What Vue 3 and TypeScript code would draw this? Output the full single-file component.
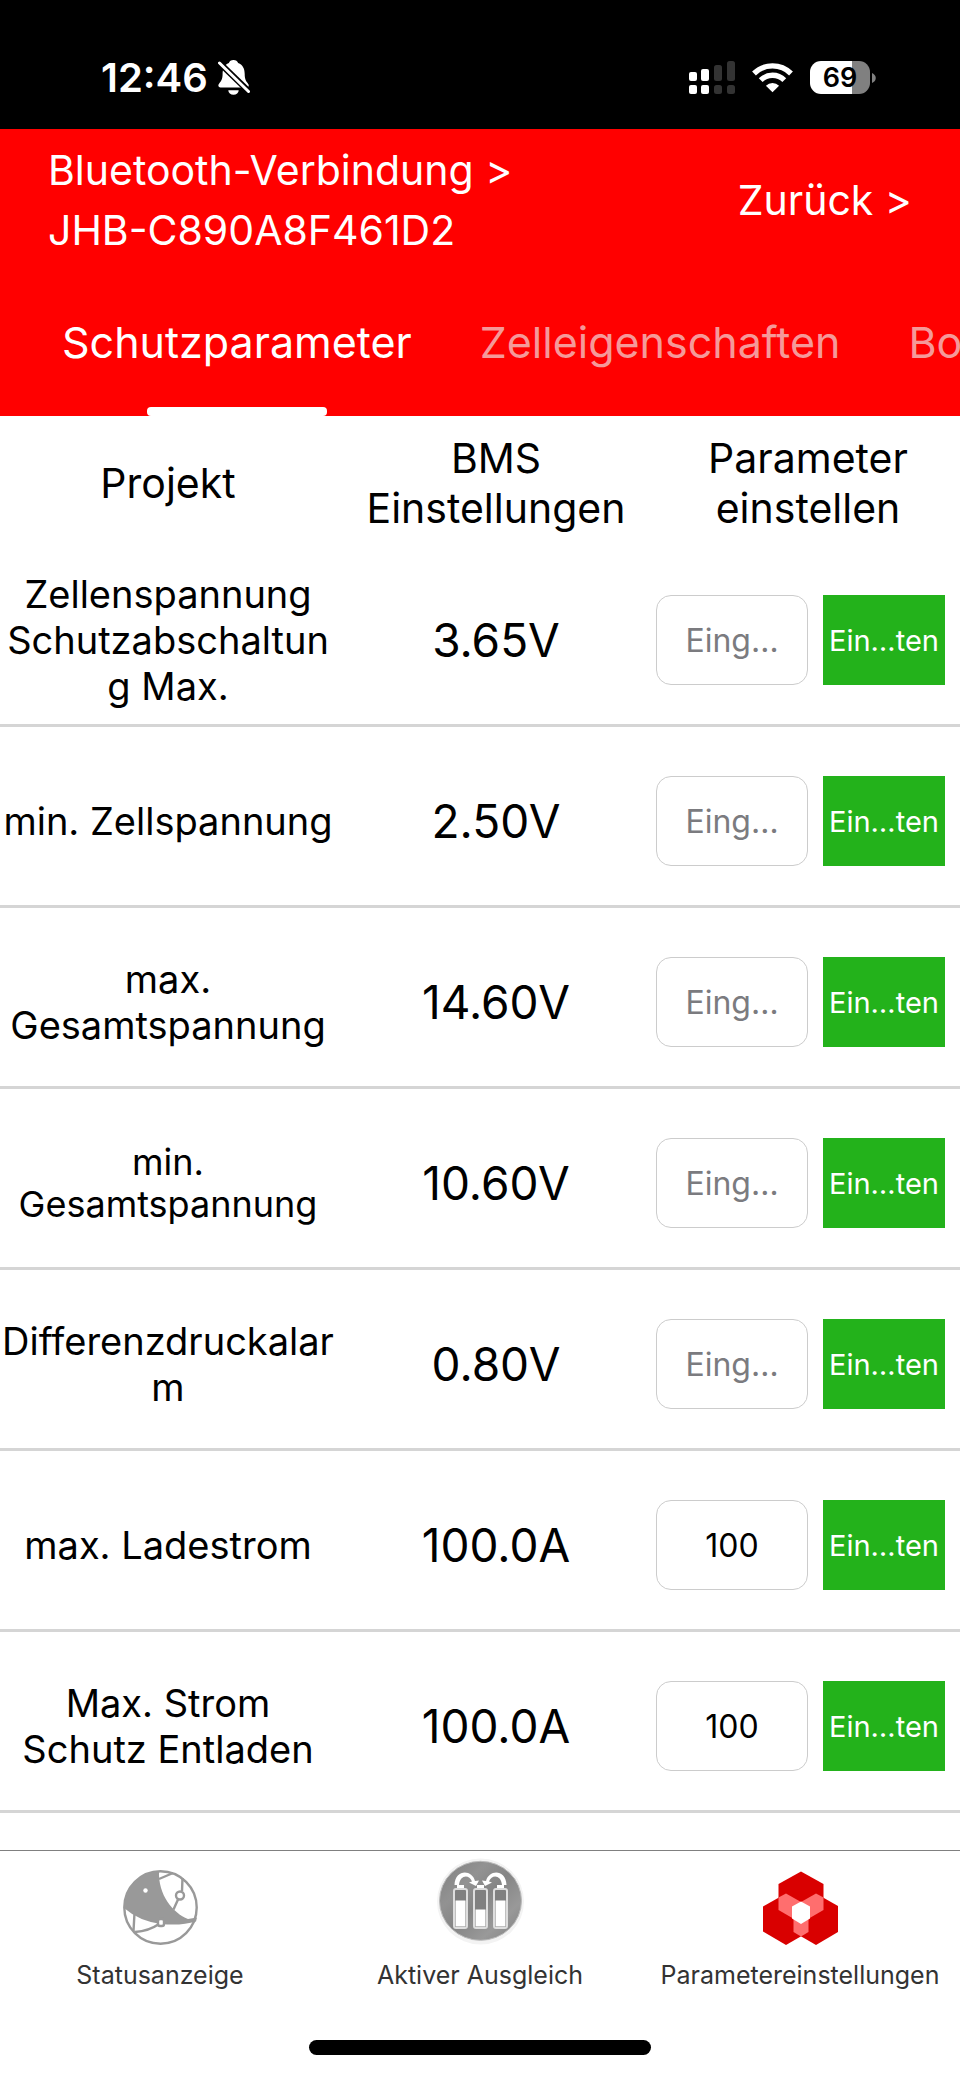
<script setup lang="ts">
import { ref } from 'vue'

interface Parameter {
  id: string
  lines: string[]
  value: string
  compact?: boolean
}

const tabs: string[] = ['Schutzparameter', 'Zelleigenschaften', 'Bo']
const activeTab = ref(0)

const parameters: Parameter[] = [
  { id: 'cell-max', lines: ['Zellenspannung', 'Schutzabschaltun', 'g Max.'], value: '3.65V' },
  { id: 'cell-min', lines: ['min. Zellspannung'], value: '2.50V' },
  { id: 'total-max', lines: ['max.', 'Gesamtspannung'], value: '14.60V' },
  { id: 'total-min', lines: ['min.', 'Gesamtspannung'], value: '10.60V', compact: true },
  { id: 'diff-alarm', lines: ['Differenzdruckalar', 'm'], value: '0.80V' },
  { id: 'charge-max', lines: ['max. Ladestrom'], value: '100.0A' },
  { id: 'discharge-max', lines: ['Max. Strom', 'Schutz Entladen'], value: '100.0A' },
]

const inputs = ref<Record<string, string>>({
  'charge-max': '100',
  'discharge-max': '100',
})
</script>

<template>
  <div class="page">
    <div class="status">
      <div class="status-left">
        <span class="time">12:46</span>
        <svg class="bell" viewBox="0 0 32 35" width="32" height="35" aria-hidden="true">
          <path fill="#fff" d="M15.5 0c-2.4 0-4 1.2-4.6 3C6.2 5 4.6 9 4.6 14c0 5-1.400 7-3.400 9.500-1.600 2-.8 4 1.300 4h26c2.200 0 3-2 1.400-4-2-2.500-3.200-4.500-3.200-9.500 0-5-1.600-9-6.600-11-.7-1.800-2.200-3-4.600-3z" />
          <path fill="#fff" d="M10.300 30.200h10.400a5.200 4.600 0 0 1-10.400 0z" />
          <path stroke="#000" stroke-width="6" d="M-1 .5 34 34.500" />
          <path stroke="#fff" stroke-width="3" stroke-linecap="round" d="M1.500 3 30.500 31.500" />
        </svg>
      </div>
      <div class="status-right">
        <svg viewBox="0 0 46 33" width="46" height="33" aria-hidden="true">
          <g fill="#fff">
            <rect x="0" y="11" width="8" height="9" rx="2" />
            <rect x="0" y="24" width="8" height="9" rx="2" />
            <rect x="12" y="8" width="8" height="12" rx="2" />
            <rect x="12" y="24" width="8" height="9" rx="2" />
          </g>
          <g fill="#333">
            <rect x="25" y="4" width="8" height="16" rx="2.500" />
            <rect x="25" y="24" width="8" height="9" rx="2.500" />
            <rect x="38" y="0" width="8" height="20" rx="2.500" />
            <rect x="38" y="24" width="8" height="9" rx="2.500" />
          </g>
        </svg>
        <svg viewBox="0 0 41 30" width="41" height="30" aria-hidden="true">
          <g fill="none" stroke="#fff" stroke-width="5.400">
            <path d="M2 10.500A26.300 26.300 0 0 1 39 10.500" />
            <path d="M8.700 17.200A16.700 16.700 0 0 1 32.300 17.200" />
          </g>
          <path fill="#fff" d="M20.500 29.300 13.900 22.700A9.500 9.500 0 0 1 27.100 22.700z" />
        </svg>
        <div class="battery">
          <span class="battery-body">69</span>
          <svg viewBox="0 0 4 10" width="4" height="10" aria-hidden="true">
            <path fill="#808080" d="M0 0c5 2 5 8 0 10z" />
          </svg>
        </div>
      </div>
    </div>

    <header class="header">
      <div class="title-row">
        <h1 class="title">Bluetooth-Verbindung &gt;<br />JHB-C890A8F461D2</h1>
        <button class="back" type="button">Zurück &gt;</button>
      </div>
      <div class="tabs" role="tablist">
        <button
          v-for="(tab, i) in tabs"
          :key="tab"
          class="tab"
          :class="{ active: i === activeTab }"
          type="button"
          role="tab"
          :aria-selected="i === activeTab"
          @click="activeTab = i"
        >
          {{ tab }}
        </button>
      </div>
    </header>

    <main class="content">
      <table class="params">
        <colgroup>
          <col class="col-name" />
          <col class="col-value" />
          <col class="col-edit" />
        </colgroup>
        <thead>
          <tr>
            <th scope="col">Projekt</th>
            <th scope="col">BMS<br />Einstellungen</th>
            <th scope="col">Parameter<br />einstellen</th>
          </tr>
        </thead>
        <tbody>
          <tr v-for="p in parameters" :key="p.id">
            <td class="name" :class="{ compact: p.compact }">
              <label :for="p.id"><span v-for="line in p.lines" :key="line" class="line">{{ line }}</span></label>
            </td>
            <td class="value">{{ p.value }}</td>
            <td>
              <div class="edit">
                <input :id="p.id" v-model="inputs[p.id]" class="field" type="text" inputmode="decimal" placeholder="Eing…" />
                <button class="set" type="button">Ein…ten</button>
              </div>
            </td>
          </tr>
        </tbody>
      </table>
    </main>

    <nav class="nav">
      <a class="nav-item" href="#status">
        <span class="nav-icon">
          <svg viewBox="0 0 75 75" width="75" height="75" aria-hidden="true">
            <circle cx="37.500" cy="37.500" r="36.200" fill="#fff" stroke="#999" stroke-width="2.400" />
            <path fill="#999" d="M36 1A36.500 36.500 0 0 0 1 38Q16 51 38 54 58 56 73 51.500L74 47.500 65 49C50 43 35 25 36 1z" />
            <g fill="none" stroke="#999" stroke-width="2.400">
              <path d="M36 9 50 3M59.500 8 59 21M55 29.500 50.500 39.500M11.500 43 10.500 61" />
              <path d="M12 62Q26 61 36 54" />
              <circle cx="57" cy="25.500" r="4" fill="#fff" />
              <rect x="35" y="49" width="6" height="7" rx="2" fill="#fff" />
            </g>
            <circle cx="22.500" cy="20.500" r="2.200" fill="#fff" />
          </svg>
        </span>
        <span>Statusanzeige</span>
      </a>
      <a class="nav-item" href="#ausgleich">
        <span class="nav-icon">
          <svg viewBox="0 0 87 87" width="87" height="87" aria-hidden="true">
            <defs>
              <linearGradient id="disc" x1="0" y1="0" x2="1" y2="1">
                <stop offset="0" stop-color="#808080" />
                <stop offset="0.300" stop-color="#929292" />
                <stop offset="0.500" stop-color="#858585" />
                <stop offset="0.750" stop-color="#999" />
                <stop offset="1" stop-color="#808080" />
              </linearGradient>
            </defs>
            <ellipse cx="43.500" cy="43.500" rx="43.500" ry="43" fill="#f3f3f3" />
            <ellipse cx="43.500" cy="42.800" rx="41" ry="39.500" fill="url(#disc)" stroke="#bbb" />
            <g fill="#808080" stroke="#dedede" stroke-width="2">
              <rect x="17" y="31" width="13" height="39" rx="2" />
              <rect x="37" y="31" width="13" height="39" rx="2" />
              <rect x="57" y="31" width="13" height="39" rx="2" />
            </g>
            <g fill="#fff">
              <path d="M18.500 42.500h10V68.500h-10zM38.500 51.500h10V68.500h-10zM58.500 42.500h10V68.500h-10z" />
              <path d="M20 27h7v3h-7zM40 27h7v3h-7zM60 27h7v3h-7z" />
              <path d="M17.500 27C18 11 35 11 38 23L42 22.500 39 28 32 24.500 35 23.500C32 16 23 17 22 27z" />
              <path d="M69.500 27C69 11 52 11 49 23L45 22.500 48 28 55 24.500 52 23.500C55 16 64 17 65 27z" />
            </g>
          </svg>
        </span>
        <span>Aktiver Ausgleich</span>
      </a>
      <a class="nav-item" href="#parameter" aria-current="page">
        <span class="nav-icon">
          <svg viewBox="0 0 75 75" width="75" height="75" aria-hidden="true">
            <g fill="#d90000">
              <path d="M38 1.500 60.500 14V40L38 53 15.500 40V14z" />
              <path d="M23 23.500 45.500 36V62L23 75 0 61.500V36.500z" />
              <path d="M53 23.500 75 36V62L53 75 30.500 62V36z" />
            </g>
            <g fill="#ff6e6e">
              <path d="M15.500 27.500 23 23.500 38 32 31 49 15.500 40z" />
              <path d="M60.500 27.500 53 23.500 38 32 45 49 60.500 40z" />
              <path d="M30.500 48.500H45.500V62L38 66.500 30.500 62z" />
            </g>
            <path fill="#fff" d="M38 31.500 47 36.500V48.500L38 54 29 48.500V36.500z" />
          </svg>
        </span>
        <span>Parametereinstellungen</span>
      </a>
    </nav>
    <div class="home"></div>
  </div>
</template>

<style>
body {
  margin: 0;
  background: #fff;
}
</style>

<style scoped>
.page {
  display: flex;
  flex-direction: column;
  min-height: 100vh;
  overflow: hidden;
  background: #fff;
  color: #000;
  font-family: Inter, "Liberation Sans", sans-serif;
}

button {
  border: 0;
  padding: 0;
  background: none;
  font-family: inherit;
  cursor: pointer;
}

.status {
  display: flex;
  justify-content: space-between;
  align-items: center;
  box-sizing: border-box;
  height: 129px;
  padding: 26px 84px 0 101px;
  background: #000;
  color: #fff;
}

.status-left {
  display: flex;
  align-items: center;
  gap: 10px;
}

.time {
  font-size: 40px;
  font-weight: 600;
}

.status-right {
  display: flex;
  align-items: center;
  gap: 17px;
}

.battery {
  display: flex;
  align-items: center;
  gap: 2px;
}

.battery-body {
  width: 60px;
  height: 33px;
  border-radius: 11px;
  background: linear-gradient(90deg, #fff 70%, #808080 70%);
  color: #000;
  font-size: 27px;
  font-weight: 600;
  line-height: 33px;
  text-align: center;
}

.header {
  background: #f00;
  color: #fff;
}

.title-row {
  display: flex;
  justify-content: space-between;
  align-items: center;
  padding: 11px 48px 7px;
}

.title {
  margin: 0;
  font-size: 41px;
  font-weight: 400;
  line-height: 60px;
}

.back {
  color: #fff;
  font-size: 41px;
  line-height: 60px;
}

.tabs {
  display: flex;
  height: 149px;
  padding-left: 28px;
  overflow: hidden;
}

.tab {
  position: relative;
  flex: none;
  padding: 0 34px;
  color: #f59999;
  font-size: 43px;
  white-space: nowrap;
}

.tab.active {
  color: #fff;
}

.tab.active::after {
  content: "";
  position: absolute;
  bottom: 0;
  left: 50%;
  width: 180px;
  height: 9px;
  margin-left: -90px;
  border-radius: 4px;
  background: #fff;
}

.content {
  flex: 1;
}

.params {
  width: 100%;
  table-layout: fixed;
  border-collapse: separate;
  border-spacing: 0;
}

.col-name {
  width: 35%;
}

.col-value {
  width: 33.333%;
}

th {
  box-sizing: border-box;
  height: 130px;
  padding: 4px 0 0;
  font-size: 41px;
  font-weight: 400;
  line-height: 50px;
}

td {
  box-sizing: border-box;
  height: 181px;
  padding: 10px 0 0;
  border-bottom: 3px solid #d5d5d5;
  text-align: center;
}

.name {
  font-size: 38px;
  line-height: 46px;
  white-space: nowrap;
}

.name.compact {
  font-size: 36px;
  line-height: 42px;
}

.line {
  display: block;
}

.value {
  font-size: 46px;
}

.edit {
  display: grid;
  grid-template-columns: minmax(0, 152fr) minmax(0, 122fr);
  gap: 15px;
  padding-right: 15px;
}

.field {
  box-sizing: border-box;
  width: 100%;
  height: 90px;
  padding: 0 20px;
  border: 1px solid #ccc;
  border-radius: 15px;
  background: #fff;
  color: #000;
  font-family: inherit;
  font-size: 32px;
  text-align: center;
}

.field::placeholder {
  color: #7b7b7f;
  opacity: 1;
}

.set {
  height: 90px;
  background: #23b21b;
  color: #fff;
  font-size: 29px;
  white-space: nowrap;
}

.nav {
  display: grid;
  grid-template-columns: repeat(3, 1fr);
  border-top: 1px solid #808080;
}

.nav-item {
  display: flex;
  flex-direction: column;
  align-items: center;
  gap: 15px;
  padding-top: 7px;
  color: #333;
  font-size: 25px;
  line-height: 30px;
  text-decoration: none;
  white-space: nowrap;
}

.nav-icon {
  display: flex;
  align-items: flex-end;
  height: 87px;
}

.home {
  width: 342px;
  height: 15px;
  margin: 50px auto 24px;
  border-radius: 8px;
  background: #000;
}
</style>
